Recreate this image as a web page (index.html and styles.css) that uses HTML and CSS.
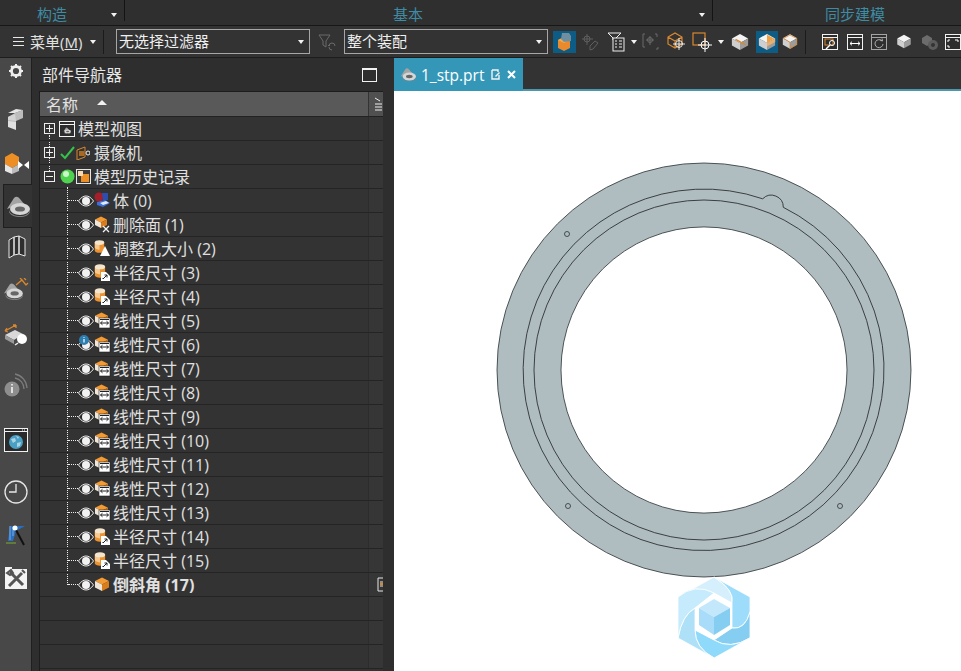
FILE: index.html
```html
<!DOCTYPE html>
<html lang="zh-CN">
<head>
<meta charset="utf-8">
<title>部件导航器</title>
<link rel="stylesheet" href="styles.css">
</head>
<body>
<svg class="defs" width="0" height="0" aria-hidden="true">
  <defs>
    <symbol id="eye" viewBox="0 0 16 12">
      <path d="M.5 6C3 2.400 5.500 1 8 1s5 1.400 7.500 5C13 9.600 10.500 11 8 11S3 9.600.5 6z" fill="#2a2a2a" stroke="#eee" stroke-width="1"/>
      <circle cx="8" cy="6" r="4" fill="#f2f2f2"/>
    </symbol>
    <symbol id="box" viewBox="0 0 16 14">
      <path d="M1 4l7-3.500L15 4 8 7.500z" fill="#f39a32"/>
      <path d="M1 4l7 3.500V14l-7-3.500z" fill="#f0e6d8"/>
      <path d="M15 4L8 7.500V14l7-3.500z" fill="#d97c1c"/>
    </symbol>
    <symbol id="cyl" viewBox="0 0 14 16">
      <path d="M1 3v10c0 1.600 2.700 3 6 3s6-1.400 6-3V3z" fill="#ee9230"/>
      <path d="M1 3v6c0 1.600 2.700 3 6 3V3z" fill="#f7c98e"/>
      <ellipse cx="7" cy="3" rx="6" ry="3" fill="#f4e5cf"/>
    </symbol>
    <symbol id="linear" viewBox="0 0 17 17">
      <use href="#box" width="15" height="13" x="0" y="0"/>
      <rect x="5" y="6" width="11" height="10" fill="#fff" stroke="#222" stroke-width=".6"/>
      <path d="M6.500 11h8M6.500 11l2-1.800M6.500 11l2 1.800M14.500 11l-2-1.800M14.500 11l-2 1.800M6 7.500h9" stroke="#222" stroke-width="1" fill="none"/>
    </symbol>
    <symbol id="radius" viewBox="0 0 17 17">
      <use href="#cyl" width="12" height="14" x="0" y="0"/>
      <path d="M7 8h5l4 4v5H7z" fill="#fff"/>
      <path d="M9 15l4-4M10.500 11H13v2.500M9 15v-1" stroke="#222" stroke-width="1" fill="none"/>
    </symbol>
    <symbol id="cube-white" viewBox="0 0 20 20">
      <path d="M1 6l9-5 9 5-9 5z" fill="#f4f4f4"/>
      <path d="M1 6l9 5v8l-9-5z" fill="#cfcfcf"/>
      <path d="M19 6l-9 5v8l9-5z" fill="#9c9c9c"/>
    </symbol>
    <symbol id="cross" viewBox="0 0 14 14">
      <circle cx="7" cy="7" r="4" fill="none" stroke="#fff" stroke-width="1"/>
      <path d="M7 0v14M0 7h14" stroke="#fff" stroke-width="1"/>
    </symbol>
    <symbol id="win" viewBox="0 0 16 16">
      <rect x=".5" y=".5" width="15" height="15" fill="#2d2d2d" stroke="#f2f2f2"/>
      <path d="M1 3.500h14" stroke="#f2f2f2"/>
      <path d="M10 2h1M12 2h1M14 2h1" stroke="#2d2d2d"/>
    </symbol>
    <symbol id="seat" viewBox="0 0 24 22">
      <path d="M1 14L8 3Q11 0 14 4L19 10L10 11z" fill="#a4a4a4"/>
      <path d="M3 15c1 4 6 6 11 6s9-2 10-6v2c-1 3-5 5-10 5S4 20 3 17z" fill="#808080"/>
      <ellipse cx="14" cy="14" rx="10" ry="6" fill="#d6d6d6"/>
      <ellipse cx="14" cy="14" rx="5" ry="2.600" fill="#666"/>
    </symbol>
  </defs>
</svg>

<div class="app">
  <header class="ribbon">
    <div class="group group-build"><span>构造</span><i class="caret"></i></div>
    <div class="group group-basic"><span>基本</span><i class="caret"></i></div>
    <div class="group group-sync"><span>同步建模</span></div>
  </header>

  <div class="toolbar">
    <svg class="ic" width="11" height="11" viewBox="0 0 11 11"><path d="M0 1.500h11M0 5.500h11M0 9.500h11" stroke="#e8e8e8" stroke-width="1"/></svg>
    <span class="menu">菜单(<u>M</u>)</span>
    <i class="caret"></i>
    <i class="vsep"></i>
    <div class="select"><span>无选择过滤器</span><i class="caret"></i></div>
    <svg class="ic" width="18" height="18" viewBox="0 0 18 18"><path d="M1 2h11L8 8v6L5 12V8z" fill="none" stroke="#6a6a6a"/><path d="M17 13a3 3 0 0 0-6 0l-1-1M11 13l1-1M14 17a3 3 0 0 1-3-3" fill="none" stroke="#6a6a6a"/></svg>
    <div class="select"><span>整个装配</span><i class="caret"></i></div>
    <span></span>
    <span class="tbtn on"><svg width="17" height="20" viewBox="0 0 17 20"><path d="M2 8l6-3 6 3v8l-6 3-6-3z" fill="#ea8a2c"/><path d="M2 8l6 3 6-3-6-3z" fill="#f3a94f"/><path d="M6 1h7l2 3v5l-7 1-3-3z" fill="#6f8fa0"/></svg></span>
    <span class="tbtn"><svg width="18" height="18" viewBox="0 0 18 18"><path d="M6 1v11M1 6h11" stroke="#5f5f5f"/><circle cx="6" cy="6" r="3" fill="none" stroke="#5f5f5f"/><path d="M9 13l5-5 3 2-5 6-3 1z" fill="none" stroke="#5f5f5f"/></svg></span>
    <span class="tbtn"><svg width="18" height="20" viewBox="0 0 18 20"><path d="M1 1h13l-5 5v2H6V6z" fill="#333" stroke="#eee"/><rect x="6" y="6" width="11" height="13" fill="#333" stroke="#eee"/><path d="M8 9h2M12 9h3M8 12h2M12 12h3M8 15h2M12 15h3" stroke="#eee"/></svg></span>
    <i class="caret"></i>
    <span class="tbtn"><svg width="18" height="18" viewBox="0 0 18 18"><path d="M3 1H1v13h2M13 1h2v3M16 14v2h-2" fill="none" stroke="#6a6a6a"/><path d="M8 3v9M4 7h8" stroke="#6a6a6a"/><circle cx="8" cy="7" r="2.500" fill="none" stroke="#6a6a6a"/></svg></span>
    <span class="tbtn"><svg width="18" height="19" viewBox="0 0 18 19"><path d="M1 5l7-4 7 4v7l-7 4-7-4zM1 5l7 4 7-4M8 9v7" fill="none" stroke="#d9882e" stroke-width="1.200"/><use href="#cross" x="6" y="6" width="12" height="12"/></svg></span>
    <span class="tbtn"><svg width="20" height="20" viewBox="0 0 20 20"><rect x="1" y="1" width="12" height="12" fill="none" stroke="#d9882e" stroke-width="1.200"/><use href="#cross" x="6" y="6" width="14" height="14"/></svg></span>
    <i class="caret"></i>
    <span class="tbtn"><svg width="18" height="18" viewBox="0 0 20 20"><use href="#cube-white"/><path d="M5 7l11 6" stroke="#d9882e" stroke-width="1.500"/></svg></span>
    <span class="tbtn on narrow"><svg width="18" height="18" viewBox="0 0 20 20"><use href="#cube-white"/><path d="M10 2l8 4-8 5z" fill="#f0a040"/><path d="M10 11l9-5v4l-9 5z" fill="#e8b070"/></svg></span>
    <span class="tbtn"><svg width="16" height="17" viewBox="0 0 20 20"><use href="#cube-white"/><path d="M10 2l8 4v8l-8 5V11L2 6z" fill="none" stroke="#d9882e"/></svg></span>
    <i class="vsep"></i>
    <span class="tbtn"><svg width="16" height="16" viewBox="0 0 16 16"><use href="#win"/><rect x="3" y="5" width="8" height="6" fill="none" stroke="#d9882e"/><circle cx="10" cy="9" r="2.500" fill="none" stroke="#fff"/><path d="M8 11l-4 4" stroke="#fff" stroke-width="1.400"/></svg></span>
    <span class="tbtn"><svg width="16" height="16" viewBox="0 0 16 16"><use href="#win"/><path d="M3 9.500h10M3 9.500l2-1.800M3 9.500l2 1.800M13 9.500l-2-1.800M13 9.500l-2 1.800" stroke="#fff" fill="none"/></svg></span>
    <span class="tbtn"><svg class="dim" width="16" height="16" viewBox="0 0 16 16"><use href="#win"/><path d="M11 7a4 4 0 1 0 1 3M9 6l2.500 1L11 4.500" stroke="#fff" fill="none"/></svg></span>
    <span class="tbtn"><svg width="16" height="15" viewBox="0 0 20 20"><use href="#cube-white"/></svg></span>
    <span class="tbtn"><svg width="18" height="18" viewBox="0 0 18 18"><path d="M1 5l5-3 5 3v5l-5 3-5-3z" fill="#6c6c6c"/><circle cx="12" cy="12" r="5" fill="#5c5c5c"/><circle cx="12" cy="12" r="2" fill="#333"/></svg></span>
    <span class="tbtn"><svg width="16" height="16" viewBox="0 0 16 16"><use href="#win"/><path d="M3 6h2M3 6v2M3 13h2M3 13v-2M10 6h3M13 6v2" stroke="#fff" fill="none"/></svg></span>
  </div>

  <main class="main">
    <nav class="rail">
      <svg class="rail-gear" width="14" height="14" viewBox="0 0 14 14"><circle cx="7" cy="7" r="4.500" fill="none" stroke="#eee" stroke-width="2.800"/><path d="M7 0v2.500M7 11.500V14M0 7h2.500M11.500 7H14M2 2l1.800 1.800M10.200 10.200L12 12M12 2l-1.800 1.800M3.800 10.200L2 12" stroke="#eee" stroke-width="2"/></svg>
      <span class="slot m13"><svg width="17" height="22" viewBox="0 0 17 22"><path d="M1 8l7-4v-0l8-3v8l-7 3v8l-8-3z" fill="#bdbdbd"/><path d="M8 4l8-3-7-1-8 4z" fill="#e6e6e6"/><path d="M1 8l7-3 1 7-8-1z" fill="#d4d4d4"/><path d="M1 12l8 1v8l-8-3z" fill="#e0e0e0"/></svg></span>
      <span class="slot m1"><svg width="26" height="24" viewBox="0 0 26 24"><path d="M2 6l7-4 7 4v7l-7 4-7-4z" fill="#ee8f26"/><path d="M2 13l7 4v6l-7-3z" fill="#e6e6e6"/><path d="M9 17l7-4v7l-7 3z" fill="#bbb"/><path d="M15 10l5 4-5 4zM26 10l-5 4 5 4z" fill="#fff"/></svg></span>
      <span class="slot active"><svg width="24" height="22" viewBox="0 0 24 22"><use href="#seat"/></svg></span>
      <span class="slot back"><svg class="shift" width="18" height="24" viewBox="0 0 18 24"><path d="M1 5l5-3v18l-5 3zM6 2l5-1v18l-5 1zM11 1l6 3v17l-6-2z" fill="#2e2e2e" stroke="#e6e6e6"/></svg></span>
      <span class="slot m1"><svg width="26" height="24" viewBox="0 0 26 24"><use href="#seat" y="4" width="20" height="18"/><path d="M13 7l6-5 4 5M19 2l-2-2M23 7l2-2M21 0l2 2" stroke="#d9882e" fill="none" stroke-width="1.300"/></svg></span>
      <span class="slot m3"><svg width="24" height="22" viewBox="0 0 24 22"><path d="M1 11l10-5 8 4-9 6z" fill="#d8d8d8"/><path d="M1 11l9 5v4l-9-5z" fill="#9a9a9a"/><path d="M1 7l11-6M1 7l2-3M1 7l3 1M12 1l-3 0M12 1l0 3" stroke="#d9882e" fill="none" stroke-width="1.300"/><circle cx="18" cy="15" r="5" fill="#fff"/><path d="M14 19l-3 2" stroke="#eee" stroke-width="1.500"/></svg></span>
      <span class="slot m8"><svg width="24" height="24" viewBox="0 0 24 24"><circle cx="8" cy="16" r="7.500" fill="#8e8e8e"/><path d="M8 11v1.500M8 14v6" stroke="#f4f4f4" stroke-width="1.600"/><path d="M11 5a11 11 0 0 1 9 11M11 1a15 15 0 0 1 12 14" fill="none" stroke="#7c7c7c" stroke-width="1.300"/></svg></span>
      <span class="slot m13"><svg width="24" height="24" viewBox="0 0 24 24"><rect x=".5" y=".5" width="23" height="23" fill="#2b2b2b" stroke="#f2f2f2"/><path d="M1 3.500h22M18 2h1M20 2h1" stroke="#f2f2f2"/><circle cx="12" cy="14" r="7" fill="#4aa0c4"/><path d="M7 11l4-1 1 3-3 2zM13 15l4-1-1 4-3 1zM12 8l3 1-1 2z" fill="#a8d4e4"/></svg></span>
      <span class="slot m10"><svg width="24" height="24" viewBox="0 0 24 24"><circle cx="12" cy="12" r="11" fill="none" stroke="#e6e6e6" stroke-width="1.300"/><path d="M12 4v8H5" fill="none" stroke="#e6e6e6" stroke-width="1.300"/></svg></span>
      <span class="slot m2"><svg width="22" height="24" viewBox="0 0 22 24"><path d="M5 2h15L11 7l-3 10H3z" fill="#2a6fc0"/><path d="M5 2v14M8 3v9" stroke="#79b0e0"/><path d="M11 6l8 15" stroke="#111" stroke-width="2"/><circle cx="10" cy="4" r="2.500" fill="#fff"/><path d="M1 19h10" stroke="#7fae2a"/></svg></span>
      <span class="slot"><svg width="22" height="22" viewBox="0 0 22 22"><rect y="2" width="22" height="20" fill="#f4f4f4"/><rect width="7" height="3" fill="#f4f4f4"/><path d="M4 19L17 6M5 5l13 13" stroke="#555" stroke-width="3"/><path d="M2 6l4-3 2 3-3 2zM17 3l3 3" stroke="#555" stroke-width="2" fill="none"/></svg></span>
    </nav>

    <section class="panel">
      <div class="panel-title">
        <span>部件导航器</span>
        <i class="maximize"></i>
      </div>
      <div class="list">
        <div class="list-head">
          <div class="head-name"><span>名称</span><i class="caret up"></i></div>
          <div class="head-menu"><svg width="7" height="15" viewBox="0 0 7 15"><path d="M0 1l5 3M0 7h7M0 10h7M0 13h7" stroke="#eee"/></svg></div>
        </div>
        <div class="tree-top">
          <div class="row">
            <i class="exp plus"></i>
            <svg class="ti first" width="16" height="16" viewBox="0 0 16 16"><use href="#win"/><use href="#seat" x="4" y="6" width="8" height="7"/></svg>
            <span class="rt tight">模型视图</span>
          </div>
          <div class="row">
            <i class="exp plus"></i>
            <svg class="ti check" width="15" height="14" viewBox="0 0 15 14"><path d="M1 8l4 4L14 1" fill="none" stroke="#35c24a" stroke-width="2"/></svg>
            <svg class="ti" width="14" height="14" viewBox="0 0 14 14"><path d="M1 4l8-3v10l-8 3z" fill="none" stroke="#d9882e"/><rect x="3" y="5" width="5" height="5" fill="#a86a20"/><circle cx="12" cy="7" r="2" fill="none" stroke="#eee"/></svg>
            <span class="rt wide">摄像机</span>
          </div>
          <div class="row">
            <i class="exp minus"></i>
            <svg class="ti check" width="15" height="15" viewBox="0 0 15 15"><circle cx="7.500" cy="7.500" r="7" fill="#4fd24f"/><circle cx="6" cy="5" r="3" fill="#c9f7c9"/></svg>
            <svg class="ti" width="15" height="15" viewBox="0 0 15 15"><rect x=".5" y=".5" width="14" height="14" fill="#3a3a3a" stroke="#e6e6e6"/><rect x="5" y="5" width="8" height="8" fill="#ee8f26"/><rect x="2" y="2" width="5" height="5" fill="#f5d9b0"/></svg>
            <span class="rt tight">模型历史记录</span>
          </div>
        </div>
        <div class="tree-children">
          <div class="row leaf"><i class="conn"></i><svg class="eye"><use href="#eye"/></svg><svg class="fi" viewBox="0 0 17 17"><circle cx="5" cy="5" r="4.500" fill="#a51f2b"/><path d="M3 10l8-2 5 3-7 4-6-2z" fill="#3a6fd8"/><path d="M8 1h6v7H9z" fill="#2a4fb0"/><path d="M6 11l6-2 3 2-6 2z" fill="#dfe8ff"/></svg><span class="rt">体 (0)</span></div>
          <div class="row leaf"><i class="conn"></i><svg class="eye"><use href="#eye"/></svg><svg class="fi" viewBox="0 0 17 17"><use href="#box" width="14" height="12"/><path d="M9 10l6 6M15 10l-6 6" stroke="#f4f4f4" stroke-width="1.300"/></svg><span class="rt">删除面 (1)</span></div>
          <div class="row leaf"><i class="conn"></i><svg class="eye"><use href="#eye"/></svg><svg class="fi" viewBox="0 0 17 17"><use href="#cyl" width="11" height="13"/><path d="M11 6l5 10H6z" fill="#fff"/></svg><span class="rt">调整孔大小 (2)</span></div>
          <div class="row leaf"><i class="conn"></i><svg class="eye"><use href="#eye"/></svg><svg class="fi"><use href="#radius"/></svg><span class="rt">半径尺寸 (3)</span></div>
          <div class="row leaf"><i class="conn"></i><svg class="eye"><use href="#eye"/></svg><svg class="fi"><use href="#radius"/></svg><span class="rt">半径尺寸 (4)</span></div>
          <div class="row leaf"><i class="conn"></i><svg class="eye"><use href="#eye"/></svg><svg class="fi"><use href="#linear"/></svg><span class="rt">线性尺寸 (5)</span></div>
          <div class="row leaf"><i class="conn"></i><svg class="eye" viewBox="0 0 16 12" overflow="visible"><use href="#eye" width="16" height="12"/><circle cx="6" cy="1" r="5" fill="#2d7fb0"/><path d="M6-2v.8M6 0v3.500" stroke="#fff" stroke-width="1.200"/></svg><svg class="fi"><use href="#linear"/></svg><span class="rt">线性尺寸 (6)</span></div>
          <div class="row leaf"><i class="conn"></i><svg class="eye"><use href="#eye"/></svg><svg class="fi"><use href="#linear"/></svg><span class="rt">线性尺寸 (7)</span></div>
          <div class="row leaf"><i class="conn"></i><svg class="eye"><use href="#eye"/></svg><svg class="fi"><use href="#linear"/></svg><span class="rt">线性尺寸 (8)</span></div>
          <div class="row leaf"><i class="conn"></i><svg class="eye"><use href="#eye"/></svg><svg class="fi"><use href="#linear"/></svg><span class="rt">线性尺寸 (9)</span></div>
          <div class="row leaf"><i class="conn"></i><svg class="eye"><use href="#eye"/></svg><svg class="fi"><use href="#linear"/></svg><span class="rt">线性尺寸 (10)</span></div>
          <div class="row leaf"><i class="conn"></i><svg class="eye"><use href="#eye"/></svg><svg class="fi"><use href="#linear"/></svg><span class="rt">线性尺寸 (11)</span></div>
          <div class="row leaf"><i class="conn"></i><svg class="eye"><use href="#eye"/></svg><svg class="fi"><use href="#linear"/></svg><span class="rt">线性尺寸 (12)</span></div>
          <div class="row leaf"><i class="conn"></i><svg class="eye"><use href="#eye"/></svg><svg class="fi"><use href="#linear"/></svg><span class="rt">线性尺寸 (13)</span></div>
          <div class="row leaf"><i class="conn"></i><svg class="eye"><use href="#eye"/></svg><svg class="fi"><use href="#radius"/></svg><span class="rt">半径尺寸 (14)</span></div>
          <div class="row leaf"><i class="conn"></i><svg class="eye"><use href="#eye"/></svg><svg class="fi"><use href="#radius"/></svg><span class="rt">半径尺寸 (15)</span></div>
          <div class="row leaf"><i class="conn"></i><svg class="eye"><use href="#eye"/></svg><svg class="fi" viewBox="0 0 17 17"><use href="#box" width="16" height="14" y="1"/></svg><span class="rt bold">倒斜角 (17)</span><svg class="tail" width="6" height="15" viewBox="0 0 6 15"><path d="M1 1h5M1 1v13h5M3 5h3M3 9h3" stroke="#e6e6e6" fill="none"/><rect x="3" y="6" width="3" height="2" fill="#d9882e"/></svg></div>
        </div>
        <div class="row"></div>
        <div class="row"></div>
        <div class="row"></div>
      </div>
    </section>

    <section class="view">
      <div class="tabs">
        <div class="tab">
          <svg width="16" height="15" viewBox="0 0 24 22"><use href="#seat"/></svg>
          <span class="tab-name">1_stp.prt</span>
          <svg class="tab-doc" width="10" height="11" viewBox="0 0 10 11"><path d="M1 1h6v2M1 1v9h7V6" fill="none" stroke="#f2f2f2" stroke-width="1.400"/><path d="M4 7l4-4 1 1-4 4z" fill="#f2f2f2"/></svg>
          <svg class="tab-x" width="9" height="9" viewBox="0 0 9 9"><path d="M1 1l7 7M8 1L1 8" stroke="#fff" stroke-width="2"/></svg>
        </div>
      </div>
      <div class="canvas">
        <svg class="drawing" viewBox="394 91 567 580" width="567" height="580">
          <path fill-rule="evenodd" fill="#b0bdc0" stroke="#2b3133" stroke-width=".8" d="M497 370a207 207 0 1 0 414 0a207 207 0 1 0-414 0zM561 370a143 143 0 1 1 286 0a143 143 0 1 1-286 0z"/>
          <path fill="none" stroke="#2b3133" stroke-width=".9" d="M762.700 198.800A12 12 0 0 1 783.300 207.300A181 181 0 0 1 624.700 532.700A181 181 0 0 1 762.700 198.800z"/>
          <circle cx="704" cy="370" r="170" fill="none" stroke="#2b3133" stroke-width=".9"/>
          <g fill="none" stroke="#2b3133" stroke-width=".8">
            <circle cx="567" cy="234" r="2.500"/>
            <circle cx="568" cy="506" r="2.500"/>
            <circle cx="840" cy="506" r="2.500"/>
          </g>
          <g stroke="#fff" stroke-width=".8">
            <path fill="#d6effc" d="M678 597L714 577Q735 590 732 603L714 593Q695 583 678 597z"/>
            <path fill="#9ddcfa" d="M714 577L750 597V612Q745 630 732 628V603Q735 590 714 577z"/>
            <path fill="#86cdf2" d="M750 612V638Q730 650 714 640L732 628Q745 630 750 612z"/>
            <path fill="#8fd9fb" d="M750 638L714 658Q695 648 695 630L714 640Q730 650 750 638z"/>
            <path fill="#aee0f8" d="M714 658L678 638Q682 615 695 608V630Q695 648 714 658z"/>
            <path fill="#c5ebfc" d="M678 638V597Q695 583 714 593L695 608Q682 615 678 638z"/>
          </g>
          <path fill="#fff" d="M714 593L732 603V628L714 640L695 630V608z"/>
          <path fill="#c3e8fb" d="M714 599L730 608L714 617L699 608z"/>
          <path fill="#a9dcf8" d="M699 608L714 617V635L699 625z"/>
          <path fill="#86cdf2" d="M730 608L714 617V635L730 625z"/>
        </svg>
      </div>
    </section>
  </main>
</div>
</body>
</html>
```

FILE: styles.css
```css
* { box-sizing: border-box; }

html, body {
  margin: 0;
  height: 100%;
  overflow: hidden;
  background: #333;
}

body {
  font-family: "Open Sans", "Noto Sans CJK SC", sans-serif;
  font-size: 16px;
  color: #e2e2e2;
}

.defs { position: absolute; }

.app {
  display: flex;
  flex-direction: column;
  width: 961px;
  height: 671px;
}

.caret {
  display: inline-block;
  width: 0;
  height: 0;
  border-left: 3.500px solid transparent;
  border-right: 3.500px solid transparent;
  border-top: 4px solid #f2f2f2;
}

.caret.up {
  border-top: 0;
  border-bottom: 5px solid #f2f2f2;
  border-left-width: 5px;
  border-right-width: 5px;
}

/* ribbon group labels */
.ribbon {
  display: flex;
  flex: none;
  height: 26px;
  background: #2f2f2f;
  border-bottom: 1px solid #171717;
  font-size: 15px;
  line-height: 30px;
  color: #3f8ba3;
}

.group {
  display: flex;
  align-items: center;
  height: 21px;
  border-right: 1px solid #141414;
}

.group span {
  margin-top: 7px;
  line-height: 20px;
}

.group .caret { margin-left: auto; margin-top: 8px; }

.group-build { width: 125px; padding: 0 7px 0 37px; }
.group-basic { width: 588px; padding: 0 7px 0 268px; }
.group-sync { flex: 1; padding-left: 112px; border-right: 0; }

/* toolbar */
.toolbar {
  display: grid;
  flex: none;
  grid-template-columns: 16px 62px 10px 18px 194px 34px 204px 5px 23px 27px 26px 10px 24px 25px 27px 11px 28px 26px 20px 18px 24px 25px 24px 26px 26px 20px;
  align-items: center;
  justify-items: center;
  height: 32px;
  padding-left: 10px;
  background: #333;
  border-bottom: 1px solid #1d1d1d;
  overflow: hidden;
}

.menu {
  justify-self: start;
  margin-left: 4px;
  font-size: 15px;
  white-space: nowrap;
}

.vsep {
  width: 1px;
  height: 24px;
  background: #1b1b1b;
  margin-right: 8px;
}

.select {
  display: flex;
  align-items: center;
  justify-content: space-between;
  width: 100%;
  height: 25px;
  padding: 0 5px 0 2px;
  border: 1px solid #a6a6a6;
  background: #333;
  color: #f0f0f0;
  font-size: 15px;
  line-height: 23px;
}

.tbtn {
  display: flex;
  align-items: center;
  justify-content: center;
  width: 100%;
  height: 22px;
}

.tbtn.on { background: #0d5c86; }
.tbtn.narrow { width: 22px; }

.dim { opacity: .6; }

/* main area */
.main {
  display: flex;
  flex: 1;
  min-height: 0;
}

.rail {
  display: flex;
  flex: none;
  flex-direction: column;
  align-items: center;
  width: 32px;
  background: #484848;
  border-right: 1px solid #1f1f1f;
}

.rail-gear { margin: 6px 0 8px; flex: none; }

.slot {
  display: flex;
  flex: none;
  align-items: center;
  justify-content: center;
  width: 100%;
  height: 42px;
}

.slot.active {
  width: 29px;
  height: 44px;
  margin: 0 -1px 0 2px;
  background: #333;
  border: 1px solid #1f1f1f;
  border-right: 0;
}

.back { margin-top: -2px; }
.shift { margin-left: 3px; }

.m1 { margin-top: 1px; }
.m2 { margin-top: 2px; }
.m3 { margin-top: 3px; }
.m8 { margin-top: 8px; }
.m10 { margin-top: 10px; }
.m13 { margin-top: 13px; }

/* navigator panel */
.panel {
  display: flex;
  flex: none;
  flex-direction: column;
  width: 362px;
  padding: 0 11px 0 7px;
  background: #2e2e2e;
}

.panel-title {
  display: flex;
  flex: none;
  align-items: center;
  justify-content: space-between;
  height: 33px;
  padding: 0 6px 2px 3px;
  color: #e6e6e6;
}

.maximize {
  width: 15px;
  height: 14px;
  margin-top: 2px;
  border: 1px solid #f2f2f2;
  border-top-width: 2px;
}

.list {
  flex: 1;
  overflow: hidden;
  border-left: 1px solid #1d1d1d;
  background: #333;
}

.list-head {
  display: flex;
  height: 26px;
  background: #595959;
  border-top: 1px solid #1d1d1d;
  border-bottom: 1px solid #222;
}

.head-name {
  display: flex;
  flex: 1;
  align-items: center;
  gap: 19px;
  padding-left: 6px;
}

.head-name .caret { margin-top: -3px; }

.head-menu {
  display: flex;
  align-items: center;
  justify-content: flex-end;
  width: 15px;
  padding-right: 1px;
  background: #505050;
  border-left: 1px solid #333;
}

.tree-top,
.tree-children { position: relative; }

.tree-top::before {
  content: "";
  position: absolute;
  left: 9px;
  top: 18px;
  bottom: 18px;
  border-left: 1px dotted #eee;
}

.tree-children::before {
  content: "";
  position: absolute;
  left: 27px;
  top: -2px;
  bottom: 12px;
  border-left: 1px dotted #eee;
}

.row {
  position: relative;
  display: flex;
  align-items: center;
  height: 24px;
  padding-left: 4px;
  background: linear-gradient(to right, transparent 328px, #2c2c2c 328px, #2c2c2c 329px, #363636 329px);
  border-bottom: 1px solid #242424;
  white-space: nowrap;
}

.leaf { padding-left: 28px; }

.rt {
  line-height: 24px;
  margin-left: 1px;
  color: #e0e0e0;
}

.rt.tight { margin-left: 3px; }
.rt.wide { margin-left: 4px; }
.bold { font-weight: 700; }

.exp {
  position: relative;
  z-index: 1;
  flex: none;
  width: 11px;
  height: 11px;
  border: 1px solid #eee;
  background: linear-gradient(#eee, #eee) center / 7px 1px no-repeat #333;
}

.exp.plus {
  background:
    linear-gradient(#eee, #eee) center / 7px 1px no-repeat,
    linear-gradient(#eee, #eee) center / 1px 7px no-repeat,
    #333;
}

.ti { flex: none; }
.ti.first { margin-left: 4px; }
.ti.check { margin-left: 5px; margin-right: 1px; }

.conn {
  flex: none;
  width: 10px;
  border-top: 1px dotted #eee;
}

.eye {
  flex: none;
  width: 16px;
  height: 12px;
}

.fi {
  flex: none;
  width: 17px;
  height: 17px;
  margin-right: 1px;
}

.tail {
  position: absolute;
  right: 0;
  top: 4px;
}

/* graphics window */
.view {
  display: flex;
  flex: 1;
  flex-direction: column;
  min-width: 0;
  background: #fff;
}

.tabs {
  flex: none;
  height: 33px;
  background: #333;
  border-bottom: 2px solid #4d97ae;
}

.tab {
  display: flex;
  align-items: center;
  width: 129px;
  height: 33px;
  padding-left: 6px;
  background: #3597b8;
  color: #fff;
}

.tab-name {
  margin-left: 5px;
  font-size: 15.500px;
  line-height: 30px;
}

.tab-doc { margin-left: 7px; }
.tab-x { margin-left: 6px; }

.canvas {
  flex: 1;
  min-height: 0;
  background: #fff;
}

.drawing { display: block; }
```
